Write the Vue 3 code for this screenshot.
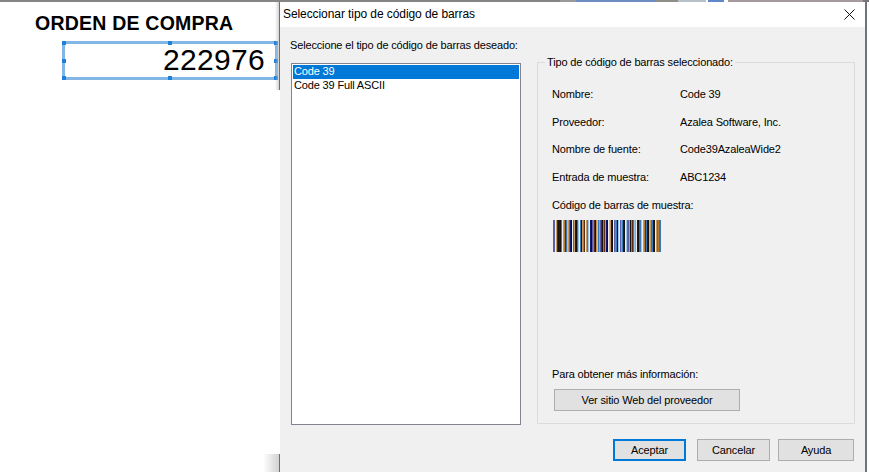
<script setup>
const details = [
  ['Nombre:', 'Code 39'],
  ['Proveedor:', 'Azalea Software, Inc.'],
  ['Nombre de fuente:', 'Code39AzaleaWide2'],
  ['Entrada de muestra:', 'ABC1234'],
]
const palette = {
  p: '#5b5fa8', w: '#eef0f2', k: '#14110f', n: '#10146a', b: '#3a78b8', o: '#b8772e',
  t: '#c49c62', r: '#5e2a18', c: '#9cc8e8', g: '#6f6f6f',
}
const pattern = 'ppwtrknkbwtorbctbnkwptnkpcwbktorwtbcwnkporktcbtprkortnkwctnkwpobkcwptbnkwcbptkorbctwnkpbcwtorbnkctpbnkwtbopb'
const bars = pattern.slice(0, 108).split('').map((c) => palette[c])
const topSegments = [
  { w: 560, c: '#858585' }, { w: 16, c: '#9a9a9a' }, { w: 80, c: '#6c8dbd' }, { w: 22, c: '#8f8d88' },
  { w: 28, c: '#b8c0c8' }, { w: 2, c: '#ffffff' }, { w: 16, c: '#5f88c8' }, { w: 4, c: '#ffffff' },
  { w: 135, c: '#a59a9e' }, { w: 6, c: '#777777' },
]
const handles = ['tl', 'tc', 'tr', 'ml', 'mr', 'bl', 'bc', 'br']
</script>

<template>
  <div class="screen">
    <div class="strip">
      <span v-for="(s, i) in topSegments" :key="i" :style="{ width: s.w + 'px', background: s.c }"></span>
    </div>
    <div class="main">
      <section class="doc">
        <h1 class="doc-title">ORDEN DE COMPRA</h1>
        <div class="field">
          222976
          <i v-for="h in handles" :key="h" class="handle" :class="h"></i>
        </div>
        <i class="edge edge-top"></i>
        <i class="edge edge-bottom"></i>
      </section>

      <section class="dialog">
        <header class="titlebar">
          <span>Seleccionar tipo de código de barras</span>
          <svg class="close" width="11" height="11" viewBox="0 0 11 11">
            <path d="M.5.5l10 10M10.5.5l-10 10" stroke="#111" stroke-width="1" fill="none" />
          </svg>
        </header>
        <div class="body">
          <div class="columns">
            <div class="pick">
              <div class="pick-label">Seleccione el tipo de código de barras deseado:</div>
              <ul class="list">
                <li class="selected">Code 39</li>
                <li>Code 39 Full ASCII</li>
              </ul>
            </div>
            <div class="group">
              <div class="legend">Tipo de código de barras seleccionado:</div>
              <dl class="details">
                <div v-for="d in details" :key="d[0]" class="row">
                  <dt>{{ d[0] }}</dt>
                  <dd>{{ d[1] }}</dd>
                </div>
              </dl>
              <div class="row">Código de barras de muestra:</div>
              <div class="barcode">
                <span v-for="(c, i) in bars" :key="i" :style="{ background: c }"></span>
              </div>
              <div class="more">Para obtener más información:</div>
              <button class="btn vendor">Ver sitio Web del proveedor</button>
            </div>
          </div>
          <footer class="actions">
            <button class="btn primary">Aceptar</button>
            <button class="btn">Cancelar</button>
            <button class="btn help">Ayuda</button>
          </footer>
        </div>
      </section>
    </div>
  </div>
</template>

<style scoped>
.screen {
  width: 869px;
  height: 472px;
  display: flex;
  flex-direction: column;
  overflow: hidden;
  background: #fff;
  font-family: "Liberation Sans", Arial, sans-serif;
  font-size: 11px;
  letter-spacing: -0.15px;
  color: #000;
}
.strip {
  display: flex;
  height: 2px;
  flex: none;
}
.strip span {
  display: block;
  height: 2px;
}
.main {
  flex: 1;
  display: flex;
  min-height: 0;
}
.doc {
  position: relative;
  width: 280px;
  flex: none;
  padding: 10px 0 0 35px;
  box-sizing: border-box;
}
.doc-title {
  margin: 0;
  font-size: 19.5px;
  line-height: 22px;
  font-weight: 700;
  letter-spacing: 0.22px;
  color: #000;
  white-space: nowrap;
}
.field {
  position: relative;
  box-sizing: border-box;
  width: 216px;
  height: 39px;
  margin: 7px 0 0 27px;
  border: 3px solid #82b6e4;
  padding-right: 10px;
  text-align: right;
  font-size: 30px;
  line-height: 31px;
  letter-spacing: 0.3px;
  color: #000;
}
.handle {
  position: absolute;
  width: 4px;
  height: 4px;
  background: #1e80d8;
}
.tl { left: -3px; top: -3px; }
.tc { left: 103px; top: -3px; }
.tr { right: -3px; top: -3px; }
.ml { left: -3px; top: 15px; }
.mr { right: -3px; top: 15px; }
.bl { left: -3px; bottom: -3px; }
.bc { left: 103px; bottom: -3px; }
.br { right: -3px; bottom: -3px; }
.edge {
  position: absolute;
  right: 0;
  width: 16px;
  border-right: 1px solid #6c6f78;
  background: linear-gradient(to right, rgba(200, 200, 200, 0), rgba(190, 190, 190, 0.7));
}
.edge-top { top: 0; height: 88px; width: 4px; }
.edge-bottom { bottom: 0; height: 18px; }
.dialog {
  width: 585px;
  flex: none;
  display: flex;
  flex-direction: column;
  background: #f0f0f0;
  border-right: 2px solid #6d7382;
  box-sizing: content-box;
}
.titlebar {
  height: 25px;
  flex: none;
  display: flex;
  align-items: center;
  justify-content: space-between;
  padding: 0 10px 2px 3px;
  box-sizing: border-box;
  background: #fff;
  font-size: 12px;
  letter-spacing: -0.08px;
}
.close {
  display: block;
  margin-top: 2px;
}
.body {
  flex: 1;
  display: flex;
  flex-direction: column;
  padding: 0 9px 0 11px;
  min-height: 0;
}
.columns {
  display: flex;
  gap: 16px;
  padding-top: 12px;
}
.pick {
  width: 230px;
  flex: none;
}
.pick-label {
  height: 13px;
  line-height: 13px;
  margin: 0 0 11px -1px;
  white-space: nowrap;
}
.list {
  box-sizing: border-box;
  width: 230px;
  height: 362px;
  margin: 0;
  padding: 1px;
  list-style: none;
  background: #fff;
  border: 1px solid #82838f;
}
.list li {
  height: 13.5px;
  line-height: 13.5px;
  padding-left: 1px;
}
.list .selected {
  background: #0078d7;
  color: #fff;
}
.group {
  position: relative;
  box-sizing: border-box;
  width: 318px;
  height: 362px;
  margin-top: 23px;
  border: 1px solid #dcdcdc;
  padding: 17px 14px 12px 14px;
  display: flex;
  flex-direction: column;
}
.legend {
  position: absolute;
  top: -7px;
  left: 7px;
  padding: 0 2px;
  line-height: 13px;
  background: #f0f0f0;
  white-space: nowrap;
}
.details {
  margin: 0;
}
.row {
  display: flex;
  align-items: center;
  height: 27.75px;
  flex: none;
}
.row dt {
  width: 128px;
}
.row dd {
  margin: 0;
}
.barcode {
  display: flex;
  width: 108px;
  height: 32px;
  margin: 1px 0 0 1px;
  flex: none;
}
.barcode span {
  display: block;
  width: 1px;
}
.more {
  margin-top: auto;
  line-height: 13px;
  margin-bottom: 8px;
}
.btn {
  box-sizing: border-box;
  width: 73px;
  height: 22px;
  padding: 0;
  border: 1px solid #adadad;
  border-radius: 0;
  background: #e1e1e1;
  font: inherit;
  letter-spacing: inherit;
  color: #000;
}
.vendor {
  width: 186px;
  margin-left: 2px;
  flex: none;
}
.primary {
  border: 2px solid #0078d7;
}
.help {
  width: 76px;
}
.actions {
  display: flex;
  justify-content: flex-end;
  gap: 11px;
  margin-top: 14px;
  padding-right: 2px;
}
.actions .help {
  margin-left: -3px;
}
</style>

<style>
html, body { margin: 0; background: #fff; }
</style>
